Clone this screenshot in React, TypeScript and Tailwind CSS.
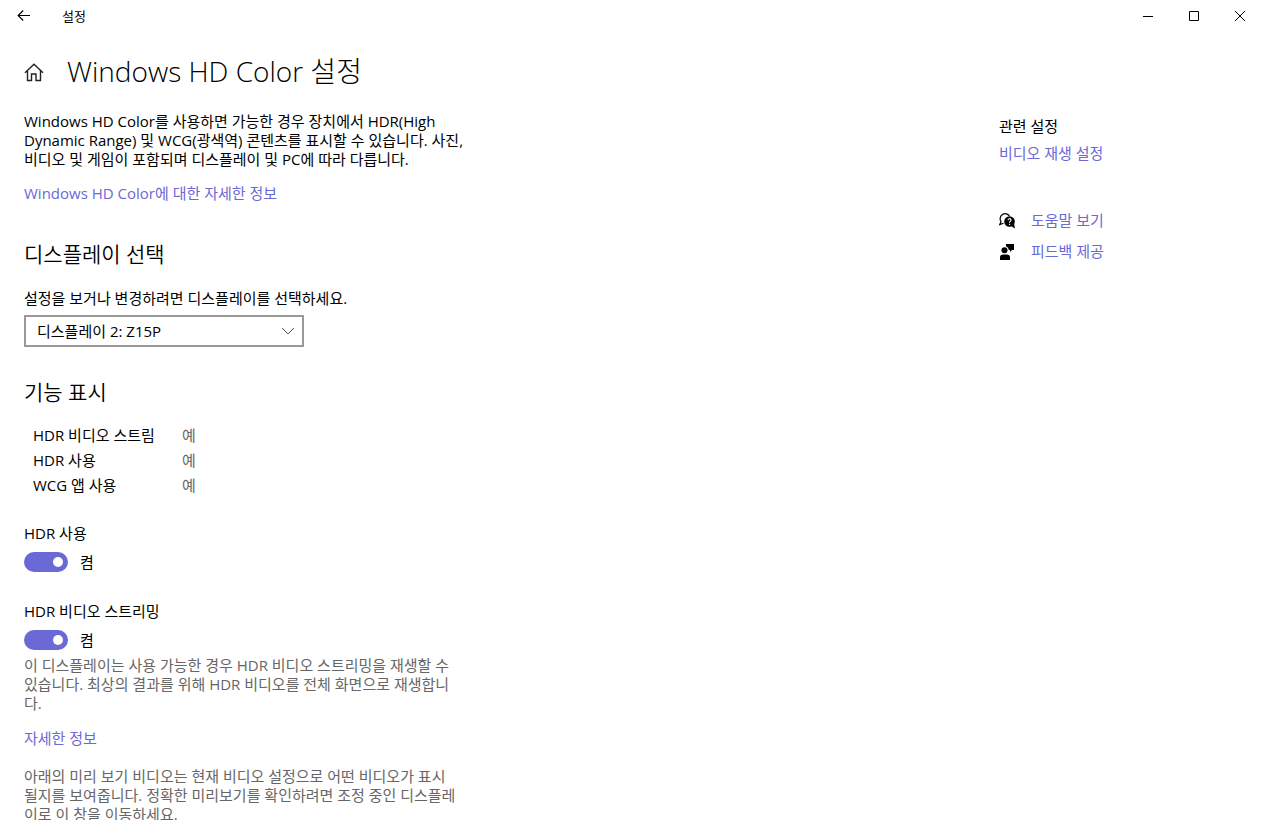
import React, { useState } from 'react';

function BackIcon() {
  return (
    <svg width="14" height="12" viewBox="0 0 14 12" fill="none" stroke="currentColor" strokeWidth="1.2">
      <path d="M1 5.500h12M6.200 0.500 1.200 5.500l5 5" />
    </svg>
  );
}

function HomeIcon() {
  return (
    <svg width="20" height="20" viewBox="0 0 20 20" fill="none" stroke="#222" strokeWidth="1.4">
      <path d="M1 10.800 10 2.200l9 8.600M3.500 8.800v9.700h4v-6.500h4.500v6.500h4.500V8.800" />
    </svg>
  );
}

function HelpIcon() {
  return (
    <svg width="16" height="16" viewBox="0 0 16 16">
      <path d="M4.500 10.200 0.800 11.500l1.200-2.800A4.700 4.700 0 1 1 10.500 3" fill="none" stroke="#000" strokeWidth="1.200" />
      <circle cx="10.500" cy="8.500" r="5.300" fill="#000" />
      <path d="M12 13l4 2.500-1-5z" fill="#000" />
      <path d="M9 7.200a1.500 1.500 0 1 1 2.200 1.300c-.5.3-.7.5-.7 1.200M10.500 10.700v1.200" fill="none" stroke="#fff" strokeWidth="1.100" />
    </svg>
  );
}

function FeedbackIcon() {
  return (
    <svg width="16" height="16" viewBox="0 0 16 16" fill="#000">
      <path d="M7 0h8v6h-2l-2 2V6H9.800A4.300 4.300 0 0 0 7 2.300z" />
      <circle cx="5.500" cy="6.300" r="3" />
      <path d="M1 16v-2.500A3 3 0 0 1 4 10.500h4a3 3 0 0 1 3 3V16z" />
    </svg>
  );
}

interface ToggleProps {
  id: string;
  label: string;
}

function Toggle({ id, label }: ToggleProps) {
  const [on, setOn] = useState(true);

  return (
    <div>
      <label htmlFor={id} className="block">{label}</label>
      <div className="mt-[9px] flex h-5 items-center gap-3">
        <span className="relative block h-5 w-11">
          <input
            id={id}
            type="checkbox"
            role="switch"
            checked={on}
            onChange={() => setOn(!on)}
            className="block h-5 w-11 appearance-none rounded-full bg-gray-500 checked:bg-[#6b69d6]"
          />
          <span className={`pointer-events-none absolute top-[5px] size-[10px] rounded-full bg-white ${on ? 'right-[5px]' : 'left-[5px]'}`} />
        </span>
        <span>{on ? '켬' : '끔'}</span>
      </div>
    </div>
  );
}

const capabilities = [
  { name: 'HDR 비디오 스트림', value: '예' },
  { name: 'HDR 사용', value: '예' },
  { name: 'WCG 앱 사용', value: '예' },
];

const linkClass = 'text-[#6b69d6] hover:text-gray-500';

export default function App() {
  return (
    <div className="h-screen overflow-x-hidden overflow-y-auto bg-white font-['Open_Sans','Noto_Sans_CJK_KR',sans-serif] text-[15px] leading-[19px] text-black [scrollbar-width:none]">
      <header className="flex h-8 items-center justify-between">
        <div className="flex items-center">
          <button type="button" aria-label="뒤로" className="flex h-8 w-12 items-center justify-center">
            <BackIcon />
          </button>
          <span className="ml-[14px] text-[13px]">설정</span>
        </div>
        <div className="flex">
          <button type="button" aria-label="최소화" className="flex h-8 w-[46px] items-center justify-center">
            <svg width="10" height="10" viewBox="0 0 10 10"><path d="M0 5.500h10" stroke="#000" /></svg>
          </button>
          <button type="button" aria-label="최대화" className="flex h-8 w-[46px] items-center justify-center">
            <svg width="10" height="10" viewBox="0 0 10 10"><path d="M.5.5h9v9h-9z" fill="none" stroke="#000" /></svg>
          </button>
          <button type="button" aria-label="닫기" className="flex h-8 w-[46px] items-center justify-center">
            <svg width="10" height="10" viewBox="0 0 10 10"><path d="M0 0l10 10M10 0 0 10" stroke="#000" /></svg>
          </button>
        </div>
      </header>

      <div className="flex items-center gap-[23px] px-6 pt-5">
        <a href="#home" aria-label="홈"><HomeIcon /></a>
        <h1 className="pb-[2px] text-[28px] leading-[38px] font-light">Windows HD Color 설정</h1>
      </div>

      <div className="flex justify-between px-6 pt-5">
        <main className="whitespace-nowrap">
          <p>
            Windows HD Color를 사용하면 가능한 경우 장치에서 HDR(High<br />
            Dynamic Range) 및 WCG(광색역) 콘텐츠를 표시할 수 있습니다. 사진,<br />
            비디오 및 게임이 포함되며 디스플레이 및 PC에 따라 다릅니다.
          </p>
          <a href="#about" className={`mt-[15px] block ${linkClass}`}>Windows HD Color에 대한 자세한 정보</a>

          <h2 className="mt-[37px] text-[21px] leading-7 font-[350]">디스플레이 선택</h2>
          <label htmlFor="display" className="mt-[21px] block">설정을 보거나 변경하려면 디스플레이를 선택하세요.</label>
          <div className="relative mt-[7px] w-[280px]">
            <select id="display" className="block h-8 w-full appearance-none border-2 border-[#999] bg-white px-[11px]">
              <option>디스플레이 2: Z15P</option>
            </select>
            <svg className="pointer-events-none absolute top-3 right-[10px]" width="12" height="8" viewBox="0 0 12 8" fill="none" stroke="#555">
              <path d="M0 1l6 6 6-6" />
            </svg>
          </div>

          <h2 className="mt-[31px] text-[21px] leading-7 font-[350]">기능 표시</h2>
          <table className="mt-[17px] ml-[9px]">
            <tbody>
              {capabilities.map((item) => (
                <tr key={item.name} className="h-[25px]">
                  <th scope="row" className="w-[149px] p-0 text-left font-normal">{item.name}</th>
                  <td className="p-0 text-[#666]">{item.value}</td>
                </tr>
              ))}
            </tbody>
          </table>

          <div className="mt-[26px]">
            <Toggle id="hdr" label="HDR 사용" />
          </div>
          <div className="mt-[30px]">
            <Toggle id="streaming" label="HDR 비디오 스트리밍" />
          </div>
          <p className="mt-[6px] text-[#666]">
            이 디스플레이는 사용 가능한 경우 HDR 비디오 스트리밍을 재생할 수<br />
            있습니다. 최상의 결과를 위해 HDR 비디오를 전체 화면으로 재생합니<br />
            다.
          </p>
          <a href="#more" className={`mt-4 block ${linkClass}`}>자세한 정보</a>
          <p className="mt-[19px] text-[#666]">
            아래의 미리 보기 비디오는 현재 비디오 설정으로 어떤 비디오가 표시<br />
            될지를 보여줍니다. 정확한 미리보기를 확인하려면 조정 중인 디스플레<br />
            이로 이 창을 이동하세요.
          </p>
        </main>

        <aside className="w-60 pt-[5px]">
          <h2>관련 설정</h2>
          <a href="#playback" className={`mt-2 block ${linkClass}`}>비디오 재생 설정</a>
          <a href="#help" className={`mt-12 flex items-center gap-4 ${linkClass}`}>
            <HelpIcon />
            도움말 보기
          </a>
          <a href="#feedback" className={`mt-3 flex items-center gap-4 ${linkClass}`}>
            <FeedbackIcon />
            피드백 제공
          </a>
        </aside>
      </div>
    </div>
  );
}
